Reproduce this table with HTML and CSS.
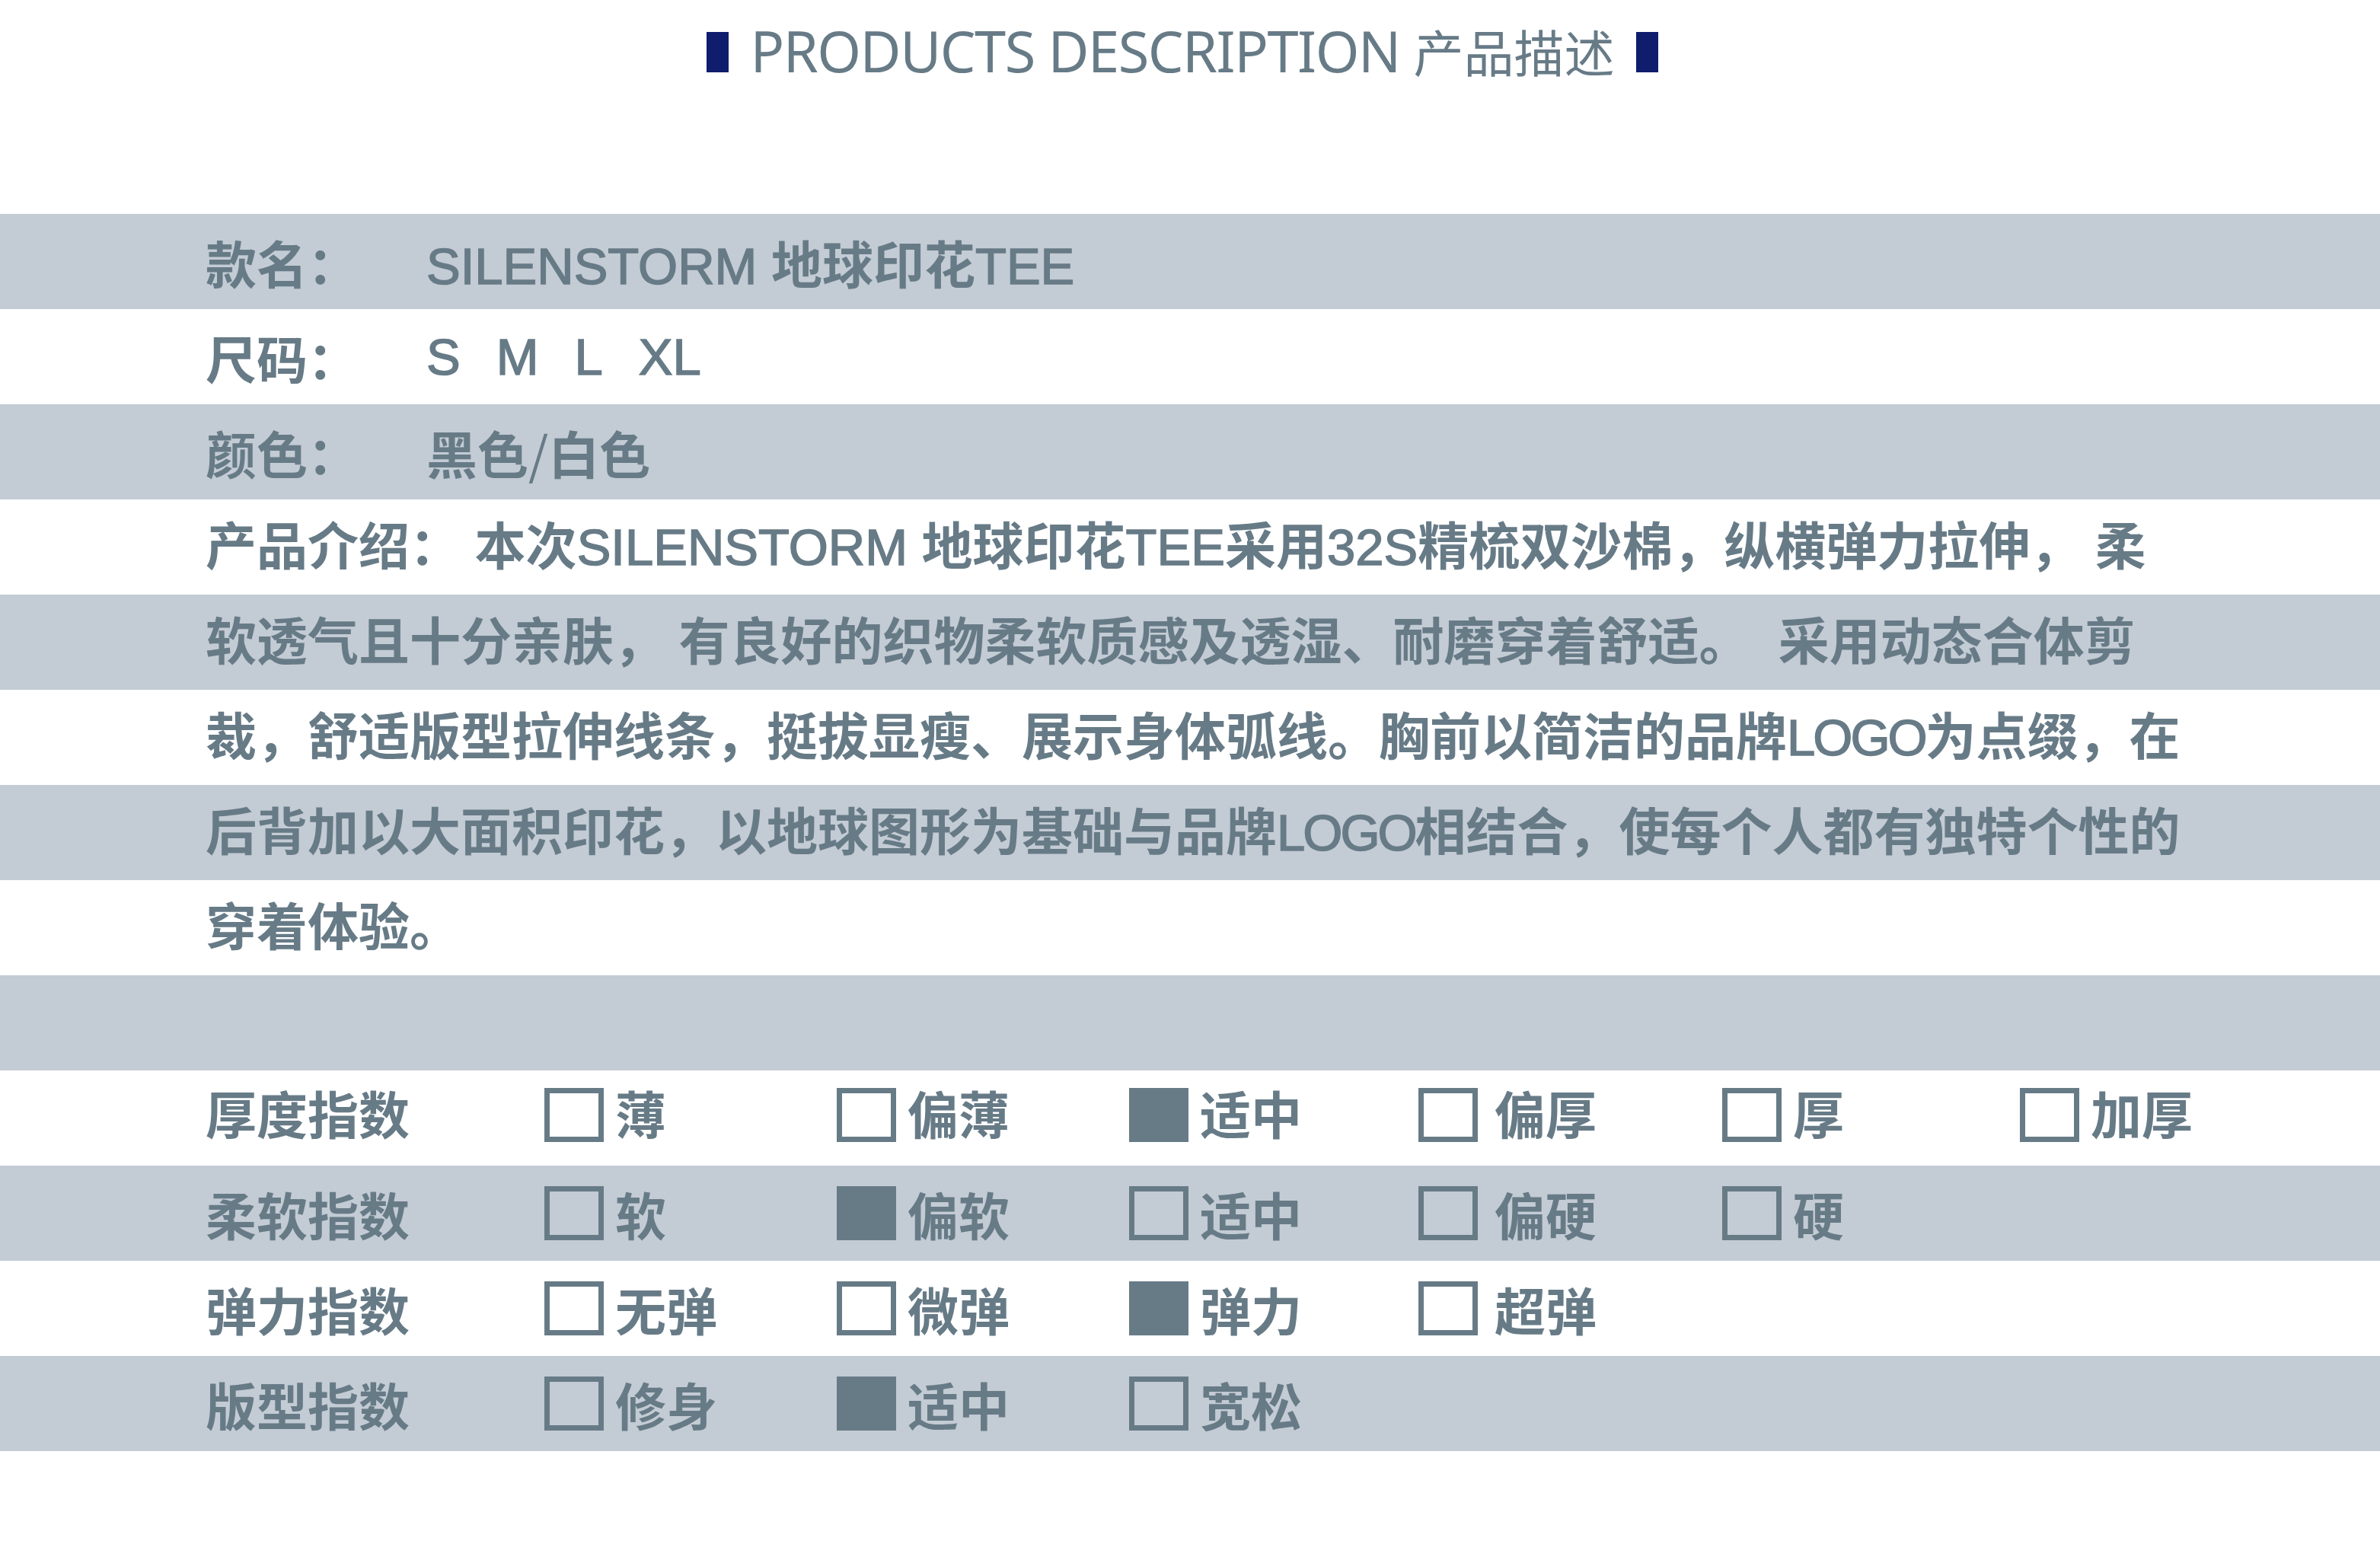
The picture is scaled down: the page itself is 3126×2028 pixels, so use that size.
FILE: index.html
```html
<!DOCTYPE html>
<html lang="zh-CN">
<head>
<meta charset="utf-8">
<title>PRODUCTS DESCRIPTION 产品描述</title>
<link rel="stylesheet" href="styles.css">
</head>
<body>
<div class="page">
  <header class="title">
    <span class="bar"></span>
    <h1><span class="en">PRODUCTS DESCRIPTION </span><span class="zh">产品描述</span></h1>
    <span class="bar"></span>
  </header>

  <section class="sheet">
    <div class="row info"><span class="key">款名：</span><span class="val"><span class="lat">SILENSTORM</span> 地球印花<span class="lat">TEE</span></span></div>
    <div class="row info"><span class="key">尺码：</span><span class="val sizes lat"><span>S</span><span>M</span><span>L</span><span>XL</span></span></div>
    <div class="row info"><span class="key">颜色：</span><span class="val">黑色<span class="sl">/</span>白色</span></div>
    <p class="intro">产品介绍： 本次<span class="lat">SILENSTORM</span> 地球印花<span class="lat">TEE</span>采用<span class="lat">32S</span>精梳双沙棉，纵横弹力拉伸， 柔<br>软透气且十分亲肤， 有良好的织物柔软质感及透湿、耐磨穿着舒适。&nbsp; 采用动态合体剪<br>裁，舒适版型拉伸线条，挺拔显瘦、展示身体弧线。胸前以简洁的品牌<span class="lat logo">LOGO</span>为点缀，在<br>后背加以大面积印花，以地球图形为基础与品牌<span class="lat logo">LOGO</span>相结合，使每个人都有独特个性的<br>穿着体验。</p>
    <div class="row blank"></div>

    <div class="row scale top">
      <span class="key">厚度指数</span>
      <span class="opt"><i class="box"></i>薄</span>
      <span class="opt"><i class="box"></i>偏薄</span>
      <span class="opt"><i class="box on"></i>适中</span>
      <span class="opt"><i class="box"></i>偏厚</span>
      <span class="opt"><i class="box"></i>厚</span>
      <span class="opt"><i class="box"></i>加厚</span>
    </div>
    <div class="row scale">
      <span class="key">柔软指数</span>
      <span class="opt"><i class="box"></i>软</span>
      <span class="opt"><i class="box on"></i>偏软</span>
      <span class="opt"><i class="box"></i>适中</span>
      <span class="opt"><i class="box"></i>偏硬</span>
      <span class="opt"><i class="box"></i>硬</span>
    </div>
    <div class="row scale">
      <span class="key">弹力指数</span>
      <span class="opt"><i class="box"></i>无弹</span>
      <span class="opt"><i class="box"></i>微弹</span>
      <span class="opt"><i class="box on"></i>弹力</span>
      <span class="opt"><i class="box"></i>超弹</span>
    </div>
    <div class="row scale">
      <span class="key">版型指数</span>
      <span class="opt"><i class="box"></i>修身</span>
      <span class="opt"><i class="box on"></i>适中</span>
      <span class="opt"><i class="box"></i>宽松</span>
    </div>
  </section>
</div>
</body>
</html>
```

FILE: styles.css
```css
html, body {
  margin: 0;
  padding: 0;
  background: #ffffff;
}

.page {
  width: 3126px;
  min-height: 2028px;
  color: #677b87;
}

/* ---------- title ---------- */
.title {
  box-sizing: border-box;
  height: 281px;
  padding-top: 30px;
  padding-right: 20px;
  display: flex;
  justify-content: center;
  align-items: baseline;
  gap: 29px;
}

.title h1 {
  margin: 0;
  font-weight: 400;
  font-size: 74px;
  line-height: 1;
  white-space: pre;
  color: #677b87;
}

.title .en {
  font-family: "Noto Sans", "Open Sans", sans-serif;
  font-size: 74px;
  letter-spacing: -1.5px;
}

.title .zh {
  font-family: "Noto Sans CJK SC", sans-serif;
  font-size: 66px;
  font-weight: 400;
}

.title .bar {
  display: block;
  width: 29px;
  height: 53px;
  background: #101d6d;
}

/* ---------- sheet ---------- */
.sheet {
  font-family: "Liberation Sans", "Noto Sans CJK SC", sans-serif;
  font-size: 67px;
  font-weight: 700;
  background: repeating-linear-gradient(to bottom, #c3cbd4 0 125px, #ffffff 125px 250px);
}

.lat {
  font-weight: 400;
  -webkit-text-stroke: 1.5px #677b87;
}

.logo {
  letter-spacing: -3px;
}

.sl {
  font-family: "Noto Sans CJK SC", sans-serif;
  font-weight: 400;
}

.row {
  box-sizing: border-box;
  height: 125px;
  padding-left: 270px;
  display: flex;
  align-items: center;
}

.info .key {
  width: 290px;
  flex: none;
}

.sizes {
  display: flex;
  gap: 47px;
}

.intro {
  margin: 0;
  padding-left: 270px;
  line-height: 125px;
  white-space: nowrap;
}

/* ---------- index scales ---------- */
.scale {
  display: grid;
  grid-template-columns: 445px 384px 384px 380px 399px 391px 1fr;
  align-items: center;
}

.scale.top {
  padding-bottom: 16px;
}

.scale.top .box {
  margin-top: 8px;
}

.opt {
  display: flex;
  align-items: center;
  gap: 15px;
}

.opt:nth-child(5) {
  gap: 22px;
}

.box {
  display: block;
  box-sizing: border-box;
  width: 78px;
  height: 71px;
  border: 7px solid #677b87;
}

.box.on {
  background: #677b87;
}
```
